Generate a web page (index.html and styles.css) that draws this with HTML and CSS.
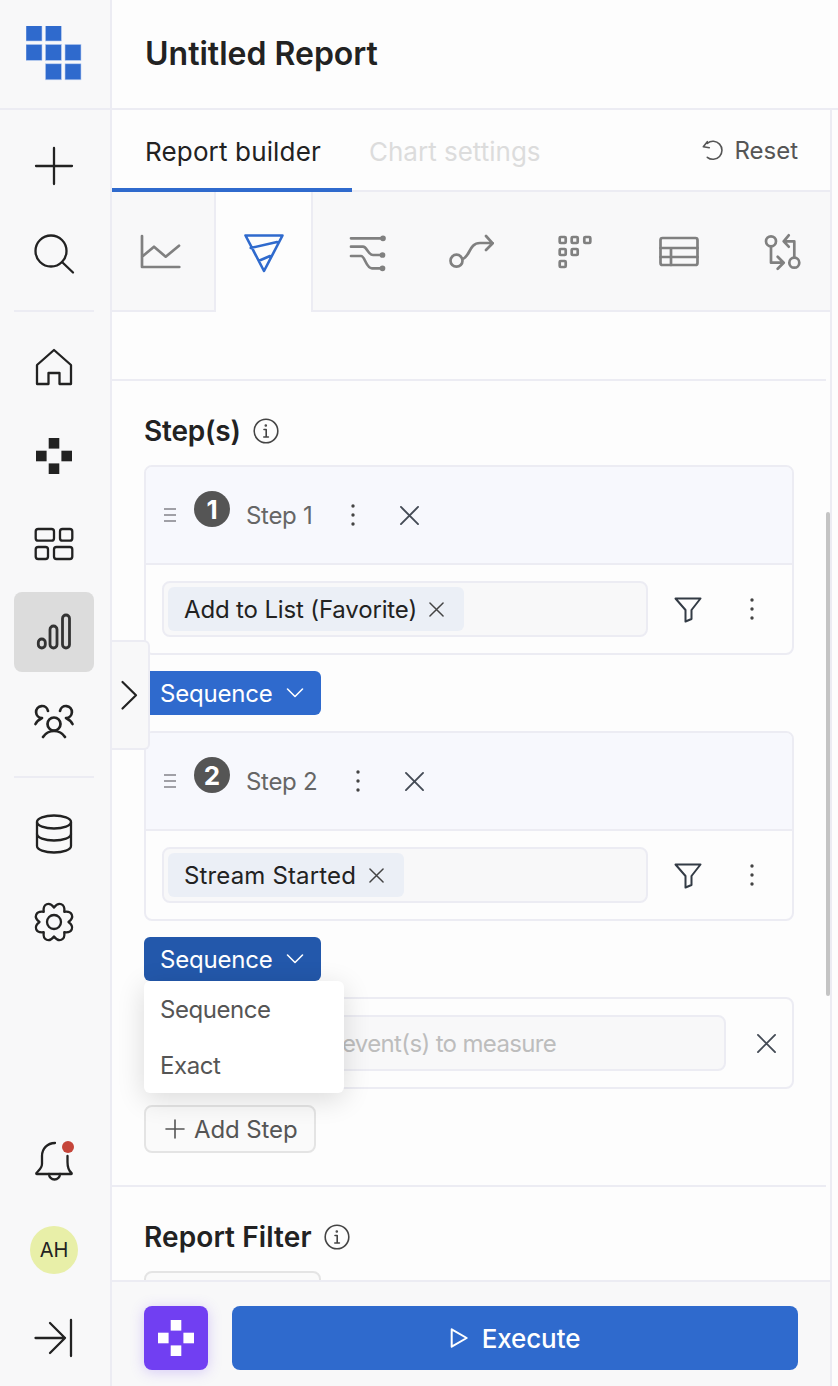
FILE: index.html
```html
<!DOCTYPE html>
<html>
<head>
    <title>Untitled Report</title>
    <link rel="stylesheet" href="styles.css">
</head>
<body>
    <aside class="sidebar">
        <div class="logo">
            <svg width="56" height="56" viewBox="0 0 56 56" fill="#2f6acd" stroke="#b9cdf0" stroke-width=".6">
                <rect x="0" y="-1" width="16" height="16"/><rect x="19.4" y="-1" width="16" height="16"/>
                <rect x="0" y="18.4" width="16" height="16"/><rect x="19.4" y="18.4" width="16" height="16"/><rect x="39" y="18.4" width="16" height="16"/>
                <rect x="19.4" y="37.8" width="16" height="16"/><rect x="39" y="37.8" width="16" height="16"/>
            </svg>
        </div>
        <nav class="nav">
            <a class="nav-item"><svg class="icon" viewBox="0 0 40 40"><path d="M20 2v36M2 20h36"/></svg></a>
            <a class="nav-item"><svg class="icon" viewBox="0 0 40 40"><circle cx="17" cy="17" r="15.5"/><path d="M28 28l11 10.5"/></svg></a>
            <div class="nav-rule"></div>
            <a class="nav-item"><svg class="icon" viewBox="0 0 40 40"><path d="M3 36V17L20 2l17 15v19H25.5V25h-11v11z"/></svg></a>
            <a class="nav-item"><svg class="icon solid" viewBox="0 0 40 40"><rect x="14.7" y="2" width="10.6" height="10.6"/><rect x="2" y="14.7" width="10.6" height="10.6"/><rect x="27.4" y="14.7" width="10.6" height="10.6"/><rect x="14.7" y="27.4" width="10.6" height="10.6"/></svg></a>
            <a class="nav-item"><svg class="icon" viewBox="0 0 40 40"><rect x="1.7" y="5" width="18.3" height="11.7" rx="2.5"/><rect x="26" y="5" width="12.3" height="11.7" rx="2.5"/><rect x="1.7" y="23" width="12.3" height="12" rx="2.5"/><rect x="20" y="23" width="18.3" height="12" rx="2.5"/></svg></a>
            <a class="nav-item active"><svg class="icon" viewBox="0 0 40 40"><rect x="4.3" y="27" width="7" height="9" rx="3.5"/><rect x="16" y="14" width="7" height="22" rx="3.5"/><rect x="28.5" y="3" width="7" height="33" rx="3.5"/></svg></a>
            <a class="nav-item"><svg class="icon thick" viewBox="0 0 40 40"><circle cx="20" cy="24" r="6.5"/><path d="M9 37c2-3 6-6 11-6s9 3 11 6"/><path d="M14 11a6 6 0 1 0-6 7c-2 1-5 3-6.500 6"/><path d="M26 11a6 6 0 1 1 6 7c2 1 5 3 6.500 6"/></svg></a>
            <div class="nav-rule"></div>
            <a class="nav-item"><svg class="icon" viewBox="0 0 40 40"><ellipse cx="20" cy="8" rx="17" ry="6.500"/><path d="M3 8v24c0 3.600 7.600 6.500 17 6.500s17-2.900 17-6.500V8"/><path d="M3 20c0 3.600 7.600 6.500 17 6.500s17-2.900 17-6.500"/></svg></a>
            <a class="nav-item"><svg class="icon" viewBox="0 0 40 40"><path d="M20 5.500C24.840-.95 31.390 1.770 30.250 9.750C38.230 8.610 40.950 15.160 34.500 20C40.950 24.840 38.230 31.390 30.250 30.250C31.390 38.230 24.840 40.950 20 34.500C15.160 40.950 8.610 38.230 9.750 30.250C1.770 31.390-.95 24.840 5.500 20C-.95 15.160 1.770 8.610 9.750 9.750C8.610 1.770 15.160-.95 20 5.500z"/><circle cx="20" cy="20" r="7"/></svg></a>
        </nav>
        <div class="nav nav-bottom">
            <a class="nav-item">
                <svg class="icon" viewBox="0 0 40 40"><path d="M21 1c-8 0-13 6-13 13v8c0 4-3 6-5.500 9q-.7 1 .5 1H37q1.200 0 .5-1C35 29 33.500 26 33.500 20v-6"/><path d="M15 32a5.500 5.500 0 0 0 11 0"/></svg>
                <span class="bell-dot"></span>
            </a>
            <a class="nav-item"><span class="avatar">AH</span></a>
            <a class="nav-item"><svg class="icon" viewBox="0 0 40 40"><path d="M1.500 20H31M16 5l15 15-15 15M37 2v36"/></svg></a>
        </div>
    </aside>

    <main class="main">
        <header class="page-head">
            <h1>Untitled Report</h1>
        </header>
        <div class="panel">
            <div class="tabs">
                <button class="tab current">Report builder</button>
                <button class="tab muted">Chart settings</button>
                <button class="reset">
                    <svg class="icon small" viewBox="0 0 20 20"><path d="M3.300 3.300a9 9 0 1 1 0 14M-.7 6.700l4-5M-.7 6.700l6 1"/></svg>
                    Reset
                </button>
            </div>
            <div class="type-tabs">
                <div class="type-tab first"><svg class="icon gray" viewBox="0 0 40 40"><path d="M2 4v31h37.300M2 24.700l12-10 11.700 10L39 13.700"/></svg></div>
                <div class="type-tab selected"><svg class="icon blue" viewBox="0 0 40 40"><path d="M1.500 3.500h37L20 39zM6.700 16L33 10M15 28.700L26 24"/></svg></div>
                <div class="type-tab"><svg class="icon gray" viewBox="0 0 40 40"><path d="M3 6.300h32M3 14.700h12c4 0 5 8.300 10 8.300h9M3 24h10c4 0 5 12.300 11 12.300h10"/><circle class="dot" cx="35" cy="6.300" r="1.500"/><circle class="dot" cx="34.500" cy="23" r="1.500"/><circle class="dot" cx="34.500" cy="36.300" r="1.500"/></svg></div>
                <div class="type-tab"><svg class="icon gray" viewBox="0 0 40 40"><circle cx="4.500" cy="28.700" r="6"/><path d="M10.500 27C18 25 17 11 28 11h12.700M34 4l6.700 7.300L34 18"/></svg></div>
                <div class="type-tab"><svg class="icon gray" viewBox="0 0 40 40"><rect x="4.700" y="5" width="6" height="6" rx="1"/><rect x="16.700" y="5" width="6" height="6" rx="1"/><rect x="29.300" y="5" width="6" height="6" rx="1"/><rect x="4.700" y="17" width="6" height="6" rx="1"/><rect x="16.700" y="17" width="6" height="6" rx="1"/><rect x="4.700" y="29" width="6" height="6" rx="1"/></svg></div>
                <div class="type-tab"><svg class="icon gray" viewBox="0 0 40 40"><rect x="1.500" y="6" width="37" height="27" rx="2"/><path d="M1.500 16h37M1.500 25h37M12 16v17"/></svg></div>
                <div class="type-tab"><svg class="icon gray" viewBox="0 0 40 40"><circle cx="9" cy="9.300" r="5"/><circle cx="32.300" cy="30.700" r="5"/><path d="M9 14.300v16.400h11.700M15.700 24.700l6 6-6 6M32.300 25.700V9.300H21.700M26.700 3.300l-5 6 5 5.400"/></svg></div>
            </div>

            <div class="scroller">
                <div class="spacer"></div>
                <section class="section">
                    <h2 class="tight">Step(s)
                        <svg class="icon info" viewBox="0 0 26 26"><circle cx="13" cy="13" r="11.800"/><path d="M11 11.500h2.200V19M10.800 19h4.600"/><circle class="dot" cx="12.800" cy="7.500" r=".5"/></svg>
                    </h2>

                    <div class="step">
                        <div class="step-head">
                            <span class="drag"><i></i><i></i><i></i></span>
                            <span class="badge">1</span>
                            <span class="step-name">Step 1</span>
                            <svg class="dots" width="4" height="22" viewBox="0 0 4 22"><circle cx="2" cy="2" r="1.700"/><circle cx="2" cy="11" r="1.700"/><circle cx="2" cy="20" r="1.700"/></svg>
                            <svg class="icon close" viewBox="0 0 20 20"><path d="M1 1l18 18M19 1L1 19"/></svg>
                        </div>
                        <div class="step-body">
                            <div class="field">
                                <span class="chip">Add to List (Favorite)
                                    <svg class="icon chip-x" viewBox="0 0 16 16"><path d="M1 1l14 14M15 1L1 15"/></svg>
                                </span>
                            </div>
                            <svg class="icon filter" viewBox="0 0 30 30"><path d="M2.500 4.500h25L18.500 16v9l-6 2.500V16z"/></svg>
                            <svg class="dots" width="4" height="22" viewBox="0 0 4 22"><circle cx="2" cy="2" r="1.700"/><circle cx="2" cy="11" r="1.700"/><circle cx="2" cy="20" r="1.700"/></svg>
                        </div>
                    </div>

                    <button class="seq">Sequence
                        <svg class="icon chev" viewBox="0 0 16 10"><path d="M.5 1l7.500 7.500L15.500 1"/></svg>
                    </button>

                    <div class="step">
                        <div class="step-head">
                            <span class="drag"><i></i><i></i><i></i></span>
                            <span class="badge">2</span>
                            <span class="step-name">Step 2</span>
                            <svg class="dots" width="4" height="22" viewBox="0 0 4 22"><circle cx="2" cy="2" r="1.700"/><circle cx="2" cy="11" r="1.700"/><circle cx="2" cy="20" r="1.700"/></svg>
                            <svg class="icon close" viewBox="0 0 20 20"><path d="M1 1l18 18M19 1L1 19"/></svg>
                        </div>
                        <div class="step-body">
                            <div class="field">
                                <span class="chip wide">Stream Started
                                    <svg class="icon chip-x" viewBox="0 0 16 16"><path d="M1 1l14 14M15 1L1 15"/></svg>
                                </span>
                            </div>
                            <svg class="icon filter" viewBox="0 0 30 30"><path d="M2.500 4.500h25L18.500 16v9l-6 2.500V16z"/></svg>
                            <svg class="dots" width="4" height="22" viewBox="0 0 4 22"><circle cx="2" cy="2" r="1.700"/><circle cx="2" cy="11" r="1.700"/><circle cx="2" cy="20" r="1.700"/></svg>
                        </div>
                    </div>

                    <div class="seq-wrap">
                        <button class="seq open">Sequence
                            <svg class="icon chev" viewBox="0 0 16 10"><path d="M.5 1l7.500 7.500L15.500 1"/></svg>
                        </button>
                        <div class="menu">
                            <div class="menu-item">Sequence</div>
                            <div class="menu-item">Exact</div>
                        </div>
                    </div>

                    <div class="step">
                        <div class="step-body last">
                            <div class="field placeholder">event(s) to measure</div>
                            <svg class="icon close" viewBox="0 0 20 20"><path d="M1 1l18 18M19 1L1 19"/></svg>
                        </div>
                    </div>

                    <button class="add-step">
                        <svg class="icon plus" viewBox="0 0 18 18"><path d="M9 0v18M0 9h18"/></svg>
                        Add Step
                    </button>
                </section>

                <section class="section">
                    <h2>Report Filter
                        <svg class="icon info" viewBox="0 0 26 26"><circle cx="13" cy="13" r="11.800"/><path d="M11 11.500h2.200V19M10.800 19h4.600"/><circle class="dot" cx="12.800" cy="7.500" r=".5"/></svg>
                    </h2>
                    <div class="add-filter"></div>
                </section>

                <div class="scrollbar"></div>
                <div class="collapse">
                    <svg class="icon" viewBox="0 0 16 28"><path d="M1.500 1l13.500 13.300L1.500 27.500"/></svg>
                </div>
            </div>

            <footer class="footer">
                <button class="ai-btn">
                    <svg width="40" height="40" viewBox="0 0 40 40" fill="#fff"><rect x="14.700" y="2" width="10.600" height="10.600"/><rect x="2" y="14.700" width="10.600" height="10.600"/><rect x="27.400" y="14.700" width="10.600" height="10.600"/><rect x="14.700" y="27.400" width="10.600" height="10.600"/></svg>
                </button>
                <button class="execute">
                    <svg class="icon play" viewBox="0 0 18 20"><path d="M1.700 1.300l15 8.700-15 8.700z"/></svg>
                    Execute
                </button>
            </footer>
        </div>
    </main>
</body>
</html>
```
FILE: styles.css
```css
* {
    box-sizing: border-box;
}
html, body {
    margin: 0;
    height: 100%;
}
body {
    display: flex;
    width: 838px;
    height: 1386px;
    overflow: hidden;
    font-family: Inter, "Noto Sans", sans-serif;
    color: #222;
    background-color: #fdfdfd;
}
button {
    font-family: inherit;
    border: none;
    background: none;
    padding: 0;
    cursor: pointer;
}

/* generic icon */
.icon {
    width: 40px;
    height: 40px;
    fill: none;
    stroke: #222;
    stroke-width: 2.3;
    stroke-linecap: round;
    stroke-linejoin: round;
    overflow: visible;
    flex: none;
}
.icon .dot {
    fill: currentColor;
}
.icon.solid {
    fill: #222;
    stroke: none;
}
.icon.thick {
    stroke-width: 2.7;
}
.icon.gray {
    stroke: #808080;
    stroke-width: 2.7;
    color: #808080;
}
.icon.blue {
    stroke: #2f6acd;
    stroke-width: 2.6;
}
.icon.small {
    width: 20px;
    height: 20px;
    stroke: #555;
    stroke-width: 1.6;
}

/* left sidebar */
.sidebar {
    width: 112px;
    flex: none;
    display: flex;
    flex-direction: column;
    background-color: #f8f8f9;
    border-right: 2px solid #ececf3;
}
.logo {
    height: 110px;
    display: flex;
    align-items: center;
    justify-content: center;
    padding-right: 2px;
    border-bottom: 2px solid #ececf3;
    flex: none;
}
.nav {
    display: flex;
    flex-direction: column;
    gap: 8px;
    padding: 16px 14px 0;
}
.nav-bottom {
    margin-top: auto;
    padding-top: 0;
    padding-bottom: 8px;
}
.nav-item {
    position: relative;
    width: 80px;
    height: 80px;
    display: flex;
    align-items: center;
    justify-content: center;
    border-radius: 8px;
}
.nav-item.active {
    background-color: #dcdcdc;
}
.nav-item.active .icon {
    stroke: #333;
    stroke-width: 2.8;
}
.nav-rule {
    width: 80px;
    height: 2px;
    background-color: #ececf3;
    margin: 8px 0;
}
.bell-dot {
    position: absolute;
    left: 48px;
    top: 19px;
    width: 12px;
    height: 12px;
    border-radius: 50%;
    background-color: #c5453a;
}
.avatar {
    width: 48px;
    height: 48px;
    border-radius: 50%;
    background-color: #e8efa8;
    display: flex;
    align-items: center;
    justify-content: center;
    font-size: 20px;
}

/* main column */
.main {
    flex: 1;
    min-width: 0;
    display: flex;
    flex-direction: column;
}
.page-head {
    height: 110px;
    flex: none;
    display: flex;
    align-items: center;
    padding: 0 0 2px 33px;
    border-bottom: 2px solid #ececf3;
}
.page-head h1 {
    margin: 0;
    font-size: 32px;
    font-weight: 600;
}
.panel {
    width: 720px;
    flex: 1;
    min-height: 0;
    display: flex;
    flex-direction: column;
    border-right: 2px solid #ececf3;
}
.tabs {
    height: 82px;
    flex: none;
    display: flex;
    align-items: stretch;
    border-bottom: 2px solid #ececf3;
    padding-right: 32px;
}
.tab {
    font-size: 26px;
    padding: 0 32px 0 33px;
    color: #222;
    margin-bottom: -2px;
    white-space: nowrap;
}
.tab.current {
    width: 240px;
    text-align: left;
    padding: 4px 0 0 33px;
    letter-spacing: .15px;
    border-bottom: 4px solid #2f6acd;
}
.tab.muted {
    color: #dcdcdc;
    padding-left: 17px;
}
.reset {
    margin-left: auto;
    display: flex;
    align-items: center;
    gap: 10px;
    font-size: 24px;
    color: #555;
}
.type-tabs {
    height: 120px;
    flex: none;
    display: flex;
    background-color: #f8f8f9;
    border-bottom: 2px solid #ececf3;
}
.type-tab {
    width: 103.5px;
    flex: none;
    display: flex;
    align-items: center;
    justify-content: center;
    padding: 2px 0 0 7px;
}
.type-tab.first {
    width: 102px;
    padding: 2px 6px 0 0;
}
.type-tab.selected {
    width: 99px;
    height: 120px;
    padding: 0;
    background-color: #fdfdfd;
    border-left: 2px solid #ececf3;
    border-right: 2px solid #ececf3;
}

/* scrolling report body */
.scroller {
    position: relative;
    flex: 1;
    min-height: 0;
    overflow: hidden;
}
.spacer {
    width: 714px;
    height: 69px;
    border-bottom: 2px solid #ececf3;
}
.section {
    width: 714px;
    padding: 34px 32px 32px;
    border-bottom: 2px solid #ececf3;
}
.section h2 {
    margin: 0 0 18px;
    height: 32px;
    display: flex;
    align-items: center;
    gap: 12px;
    font-size: 28px;
    font-weight: 600;
    letter-spacing: .1px;
}
.section h2.tight {
    letter-spacing: -.2px;
}
.icon.info {
    width: 26px;
    height: 26px;
    stroke: #444;
    stroke-width: 1.6;
    color: #444;
}
.step {
    border: 2px solid #ececf3;
    border-radius: 8px;
    overflow: hidden;
}
.step-head {
    height: 98px;
    display: flex;
    align-items: center;
    padding-left: 18px;
    background-color: #f7f8fd;
    border-bottom: 2px solid #ececf3;
}
.drag {
    width: 12px;
    display: flex;
    flex-direction: column;
    gap: 4px;
    margin-right: 18px;
}
.drag i {
    height: 2px;
    background-color: #a0a0a6;
}
.badge {
    width: 36px;
    height: 36px;
    border-radius: 50%;
    background-color: #555;
    color: #fff;
    font-size: 26px;
    font-weight: 700;
    display: flex;
    align-items: center;
    justify-content: center;
    margin-bottom: 12px;
    margin-right: 16px;
}
.step-name {
    font-size: 24px;
    letter-spacing: -.3px;
    color: #666;
    margin-right: 39px;
}
.dots {
    fill: #444;
    flex: none;
}
.icon.close {
    width: 19px;
    height: 19px;
    stroke: #444b55;
    stroke-width: 2;
    margin-left: 45px;
}
.step-body {
    height: 88px;
    display: flex;
    align-items: center;
    padding: 0 16px;
}
.field {
    width: 486px;
    height: 56px;
    padding: 4px;
    display: flex;
    align-items: center;
    flex: none;
    background-color: #f8f8f9;
    border: 2px solid #ececf3;
    border-radius: 8px;
}
.chip {
    height: 44px;
    display: flex;
    align-items: center;
    gap: 12px;
    padding: 0 20px 0 16px;
    font-size: 24px;
    letter-spacing: -.15px;
    color: #222;
    background-color: #ebeff6;
    border-radius: 6px;
}
.chip.wide {
    gap: 13px;
    letter-spacing: .15px;
}
.icon.chip-x {
    width: 15px;
    height: 15px;
    stroke: #444;
    stroke-width: 1.6;
}
.icon.filter {
    width: 30px;
    height: 30px;
    stroke: #333b45;
    stroke-width: 2;
    margin-left: 25px;
}
.step-body .dots {
    margin-left: 47px;
}
.seq-wrap {
    position: relative;
    margin: 16px 0;
}
.seq {
    width: 177px;
    height: 44px;
    display: flex;
    align-items: center;
    gap: 14px;
    padding-left: 16px;
    margin: 16px 0;
    font-size: 24px;
    letter-spacing: -.2px;
    color: #fff;
    background-color: #2f6acd;
    border-radius: 6px;
}
.seq.open {
    margin: 0;
    background-color: #2358ab;
}
.icon.chev {
    width: 16px;
    height: 10px;
    stroke: #fff;
    stroke-width: 1.6;
}
.menu {
    position: absolute;
    left: 0;
    top: 44px;
    z-index: 2;
    width: 200px;
    height: 112px;
    background-color: #fff;
    border-radius: 6px;
    box-shadow: 0 6px 28px rgba(0, 0, 0, .14);
}
.menu-item {
    height: 56px;
    display: flex;
    align-items: center;
    padding-left: 16px;
    font-size: 24px;
    letter-spacing: -.45px;
    color: #555;
}
.step-body.last {
    height: 88px;
}
.placeholder {
    width: 564px;
    padding-left: 178px;
    font-size: 24px;
    letter-spacing: -.65px;
    color: #bdbdbd;
    white-space: nowrap;
}
.last .close {
    margin-left: 31px;
}
.add-step {
    margin-top: 16px;
    width: 172px;
    height: 48px;
    display: flex;
    align-items: center;
    gap: 10px;
    padding-left: 20px;
    font-size: 24px;
    letter-spacing: -.1px;
    color: #555;
    background-color: #fafafa;
    border: 2px solid #e4e4e4;
    border-radius: 8px;
}
.icon.plus {
    width: 18px;
    height: 18px;
    stroke: #555;
    stroke-width: 1.6;
}
.add-filter {
    width: 177px;
    height: 48px;
    background-color: #fafafa;
    border: 2px solid #e4e4e4;
    border-radius: 8px;
}
.scrollbar {
    position: absolute;
    right: 0;
    top: 200px;
    width: 4px;
    height: 484px;
    border-radius: 2px;
    background-color: #c4c4c4;
}
.collapse {
    position: absolute;
    left: 0;
    top: 328px;
    width: 38px;
    height: 110px;
    display: flex;
    align-items: center;
    justify-content: flex-end;
    padding-right: 11px;
    background-color: #f8f8f9;
    border: 2px solid #ececf3;
    border-left: none;
    border-radius: 0 6px 6px 0;
}
.collapse .icon {
    width: 16px;
    height: 28px;
    stroke-width: 2.2;
}

/* bottom bar */
.footer {
    height: 106px;
    flex: none;
    display: flex;
    gap: 24px;
    padding: 24px 32px 16px;
    background-color: #f8f8f9;
    border-top: 2px solid #ececf3;
}
.ai-btn {
    width: 64px;
    height: 64px;
    display: flex;
    align-items: center;
    justify-content: center;
    background-color: #713ff2;
    border-radius: 8px;
    box-shadow: 0 2px 14px rgba(113, 63, 242, .25);
}
.execute {
    flex: 1;
    height: 64px;
    display: flex;
    align-items: center;
    justify-content: center;
    gap: 14px;
    font-size: 26px;
    font-weight: 500;
    letter-spacing: -.1px;
    color: #fff;
    background-color: #2f6acd;
    border-radius: 8px;
}
.icon.play {
    width: 18px;
    height: 20px;
    stroke: #fff;
    stroke-width: 2;
}
```
